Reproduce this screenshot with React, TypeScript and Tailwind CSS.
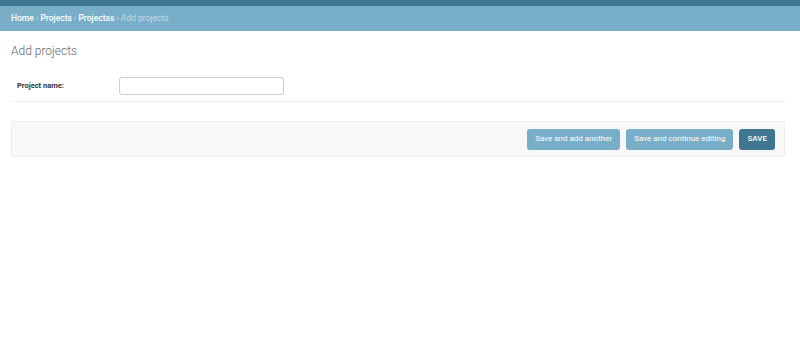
export default function App() {
  return (
    <div className="min-h-[339px] bg-white" style={{ fontFamily: 'Roboto, "Liberation Sans", sans-serif' }}>
      <div className="h-[6px] bg-[#417690]" />
      <div className="h-[25px] bg-[#79aec8] flex items-center px-[11px] text-[8.5px] text-[#c4dce8]">
        <span className="text-white font-medium">Home</span>
        <span className="mx-[2px]">›</span>
        <span className="text-white font-medium">Projects</span>
        <span className="mx-[2px]">›</span>
        <span className="text-white font-medium">Projectss</span>
        <span className="mx-[2px]">›</span>
        <span>Add projects</span>
      </div>
      <div className="pl-[11px] pr-[15px]">
        <h1 className="mt-[12px] text-[12px] font-light text-[#666] leading-[16px]">Add projects</h1>
        <div className="mt-[11px] flex items-center h-[32px] border-b border-[#eee] pl-[6px]">
          <label className="w-[102px] text-[7.5px] font-bold text-[#333]">Project name:</label>
          <input className="w-[165px] h-[18px] border border-[#ccc] rounded-[3px] outline-none" />
        </div>
        <div className="mt-[19px] h-[36px] bg-[#f8f8f8] border border-[#eee] rounded-[2px] flex items-center justify-end gap-[6px] pr-[9px]">
          <button className="h-[21px] px-[8px] rounded-[3px] bg-[#79aec8] text-white text-[8px]">Save and add another</button>
          <button className="h-[21px] px-[8px] rounded-[3px] bg-[#79aec8] text-white text-[8px]">Save and continue editing</button>
          <button className="h-[21px] px-[8px] rounded-[3px] bg-[#417690] text-white text-[8px] font-medium">SAVE</button>
        </div>
      </div>
    </div>
  );
}
